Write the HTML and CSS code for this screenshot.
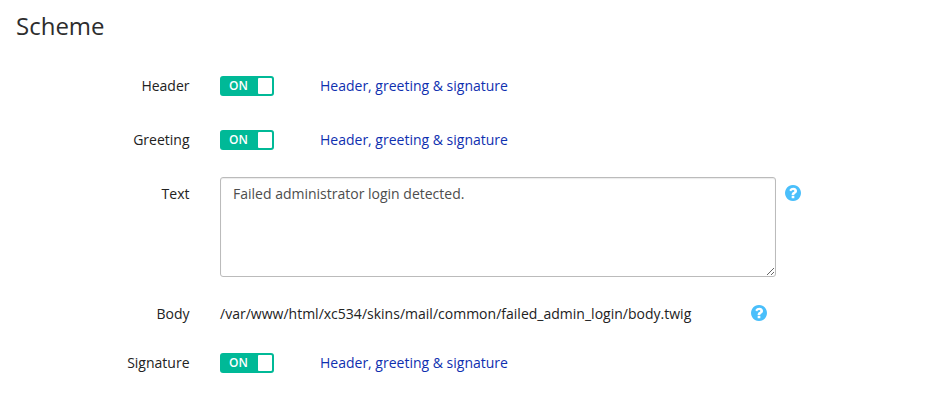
FILE: index.html
```html
<!DOCTYPE html>
<html lang="en">
<head>
<meta charset="utf-8">
<title>Scheme</title>
<link rel="stylesheet" href="styles.css">
</head>
<body>
<svg class="defs" width="0" height="0"><symbol id="question" viewBox="0 128 1536 1536"><path d="M896 1376v-192q0-14-9-23t-23-9h-192q-14 0-23 9t-9 23v192q0 14 9 23t23 9h192q14 0 23-9t9-23zm256-672q0-88-55.500-163t-138.500-116-170-41q-243 0-371 213-15 24 8 42l132 100q7 6 19 6 16 0 25-12 53-68 86-92 34-24 86-24 48 0 85.500 26t37.500 59q0 38-20 61t-68 45q-63 28-115.500 86.500t-52.500 125.500v36q0 14 9 23t23 9h192q14 0 23-9t9-23q0-19 21.500-49.500t54.500-49.500q32-18 49-28.500t46-35 44.500-48 28-60.500 12.500-81zm384 192q0 209-103 385.500t-279.500 279.500-385.500 103-385.500-103-279.500-279.500-103-385.500 103-385.500 279.500-279.500 385.500-103 385.500 103 279.500 279.500 103 385.500z"/></symbol></svg>
<h2 class="title">Scheme</h2>
<div class="form">
  <div class="row"><div class="label">Header</div><div class="switch"><span class="on">ON</span><span class="knob"></span></div><a class="link">Header, greeting &amp; signature</a></div>
  <div class="row"><div class="label">Greeting</div><div class="switch"><span class="on">ON</span><span class="knob"></span></div><a class="link">Header, greeting &amp; signature</a></div>
  <div class="row row-text"><div class="label">Text</div><textarea class="area">Failed administrator login detected.</textarea><svg class="help"><use href="#question"/></svg></div>
  <div class="row row-body"><div class="label">Body</div><div class="path">/var/www/html/xc534/skins/mail/common/failed_admin_login/body.twig</div><svg class="help"><use href="#question"/></svg></div>
  <div class="row"><div class="label">Signature</div><div class="switch"><span class="on">ON</span><span class="knob"></span></div><a class="link">Header, greeting &amp; signature</a></div>
</div>
</body>
</html>
```
FILE: styles.css
```css
* { box-sizing: border-box; }
body { margin: 0; background: #fff; color: #222; font: 14px/20px "Open Sans", sans-serif; }
.defs { display: block; }
.title { margin: 0; padding: 10px 16px 0; height: 59px; font-size: 24px; line-height: 32px; font-weight: 400; color: #2d2d2d; }
.form { display: flex; flex-direction: column; }
.row { display: flex; align-items: flex-start; height: 54px; padding-top: 17px; }
.label { width: 189.5px; margin-right: 30.5px; text-align: right; flex: none; }
.switch { display: flex; width: 54px; height: 20px; padding: 2px; border-radius: 3px; background: #00b997; flex: none; }
.on { width: 36px; padding-left: 7px; color: #fff; font-size: 12px; line-height: 16px; font-weight: 600; }
.knob { width: 14px; height: 16px; background: #fff; border-radius: 1px; }
.link { margin-left: 46px; color: #0f30b0; }
.row-text { height: 120px; }
.area { width: 556px; height: 100px; margin: -7px 0 0; padding: 6px 12px; border: 1px solid #bbb; border-radius: 3px; box-shadow: inset 0 1px 1px rgba(0, 0, 0, 0.08); font: inherit; color: #4d4d4d; resize: both; }
.help { width: 16px; height: 16px; margin: 1px 0 0 9px; flex: none; fill: #4abffb; }
.row-body { height: 49px; }
.path { width: 522px; letter-spacing: 0.01px; }
```
